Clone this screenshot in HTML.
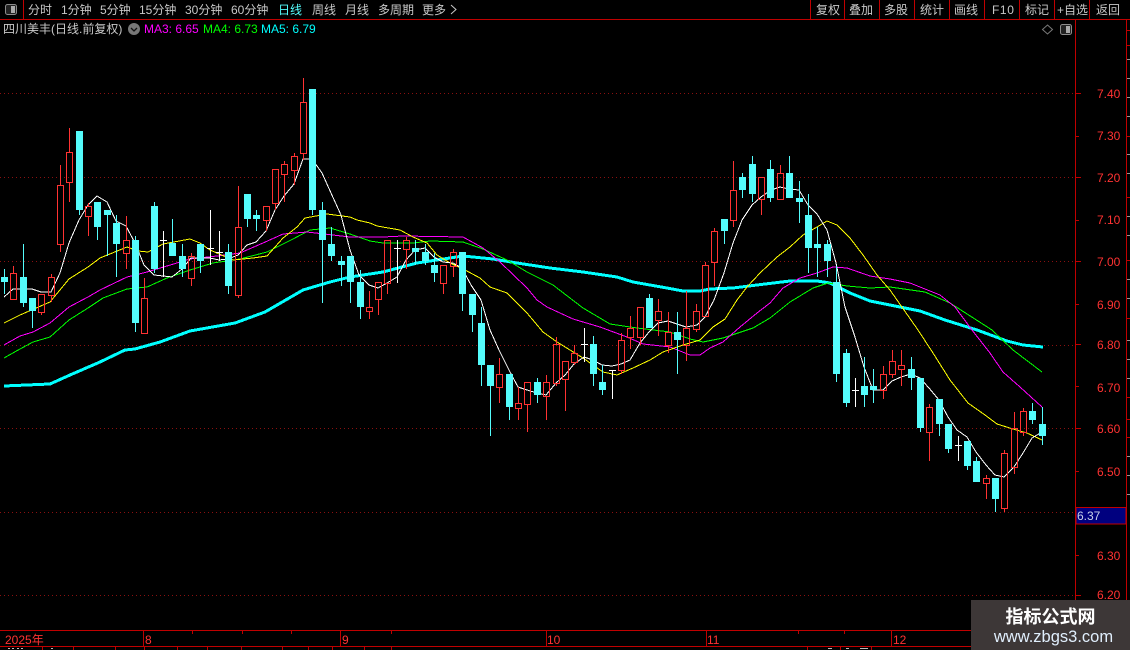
<!DOCTYPE html>
<html><head><meta charset="utf-8"><style>
html,body{margin:0;padding:0;background:#000;width:1130px;height:650px;overflow:hidden}
svg{display:block}
text{font-family:"Liberation Sans","WenQuanYi Zen Hei","Noto Sans CJK SC",sans-serif;font-size:12px}
.n text{fill:#c8c8c8}
.a text{fill:#ff3232}
.l{fill:none;stroke-linejoin:round;shape-rendering:crispEdges}
</style></head><body>
<svg width="1130" height="650" viewBox="0 0 1130 650" xmlns="http://www.w3.org/2000/svg">
<rect width="1130" height="650" fill="#000"/>
<!-- grid -->
<path d="M0 93.500H1075M0 177.500H1075M0 261.500H1075M0 345.500H1075M0 428.500H1075M0 512.500H1075M0 595.500H1075" stroke="#8a1010" stroke-dasharray="1 3" shape-rendering="crispEdges"/>
<!-- frame -->
<path d="M0 19.500H1130M23.500 0V19M810.500 0V19M844.500 0V19M879.500 0V19M914.500 0V19M949.500 0V19M984.500 0V19M1019.500 0V19M1054.500 0V19M1089.500 0V19M1075.500 19V630M1126.500 19V630M0 630.500H1130M0 646.500H1130M143.500 630V646M340.500 630V646M546.500 630V646M706.500 630V646M891.500 630V646M192.500 630V634M242.500 630V634M291.500 630V634M391.500 630V634M798.500 630V634M844.500 630V634M42.500 646V650M73.500 646V650M115.500 646V650M144.500 646V650M177.500 646V650M207.500 646V650M241.500 646V650M282.500 646V650M308.500 646V650M332.500 646V650M364.500 646V650M391.500 646V650M807.500 646V650M840.500 646V650M871.500 646V650" stroke="#c00000" fill="none" shape-rendering="crispEdges"/>
<path d="M1075 93.500H1081M1075 136.500H1079M1075 177.500H1081M1075 220.500H1079M1075 261.500H1081M1075 304.500H1079M1075 344.500H1081M1075 386.500H1079M1075 428.500H1081M1075 471.500H1079M1075 512.500H1081M1075 555.500H1079M1075 595.500H1081M1126 30.500H1130M1126 45.500H1130M1126 136.500H1130M1126 197.500H1130M1126 260.500H1130M1126 318.500H1130M1126 397.500H1130M1126 419.500H1130M1126 437.500H1130" stroke="#c00000" shape-rendering="crispEdges"/>
<path d="M1127 59.500H1130M1127 78.500H1130M1127 97.500H1130M1127 116.500H1130M1127 154.500H1130M1127 173.500H1130M1127 216.500H1130M1127 235.500H1130M1127 279.500H1130M1127 298.500H1130M1127 340.500H1130M1127 359.500H1130M1127 378.500H1130M1127 456.500H1130M1127 475.500H1130M1127 494.500H1130" stroke="#999" shape-rendering="crispEdges"/>
<!-- MA lines -->
<polyline class="l" stroke="#00ffff" stroke-width="3" points="4,386 50,384 70,375 100,362 125,350 135,349 160,342 190,331 235,323 265,312 303,290 330,282 350,277 383,272 417,263 450,258 463,256 493,259 517,263 550,268 583,272 617,277 633,282 667,288 683,291 700,291 710,289 733,288 757,285 790,281 817,281 830,283 850,293 870,301 890,305 920,311 945,320 977,330 1007,341 1023,345 1043,347"/>
<polyline class="l" stroke="#00ff00" points="4,358 20,349 33,342 50,337 69,320 88,308 103,298 127,289 147,287 167,278 190,270 213,263 240,259 267,252 293,239 310,230 330,228 350,234 370,241 383,243 413,243 430,241 463,242 483,249 507,260 527,272 553,285 583,308 610,324 637,328 670,332 690,339 703,342 723,338 753,328 770,318 790,302 813,288 828,283 847,286 870,288 890,287 925,292 950,303 992,330 1013,350 1042,372"/>
<polyline class="l" stroke="#ff00ff" points="4,345 20,336 33,332 50,323 69,307 88,297 100,290 127,277 147,272 167,266 190,259 217,256 240,253 263,243 283,234 307,232 350,237 383,237 403,236 463,237 483,248 500,262 527,288 537,300 547,307 573,319 600,327 627,337 643,344 670,347 690,355 700,355 710,348 723,342 740,327 757,313 770,303 783,288 800,278 817,273 833,267 847,268 870,276 890,279 910,283 940,295 955,307 972,330 990,353 1003,372 1020,387 1042,407"/>
<polyline class="l" stroke="#ffff00" points="4,323 20,315 50,302 69,279 88,267 100,258 127,247 138,251 148,252 163,244 190,239 200,243 210,250 233,260 253,258 267,256 283,238 297,227 305,218 327,214 350,217 357,220 370,223 377,226 400,230 413,237 427,243 437,255 450,263 465,270 480,278 490,287 507,293 527,313 543,332 557,342 583,358 603,372 617,375 633,368 650,360 663,352 683,345 700,340 713,327 725,319 737,300 747,287 760,273 777,257 790,247 803,235 817,227 827,221 837,225 850,238 863,255 877,275 890,290 918,330 933,353 950,380 968,403 985,415 997,424 1013,429 1027,433 1042,440"/>
<polyline class="l" stroke="#ffffff" points="4,297 13,289 32,289 41,292 51,292 60,273 69,243 79,220 88,205 97,196 107,202 116,221 126,226 135,243 144,265 154,275 163,276 172,277 182,269 191,258 210,258 219,260 228,259 238,255 247,245 256,242 266,231 275,210 284,196 294,184 303,159 312,159 322,173 331,193 341,215 350,250 359,275 369,285 378,288 387,283 397,277 406,260 415,250 425,248 434,257 443,262 453,263 462,268 471,285 481,300 490,330 499,350 509,370 518,387 527,390 537,393 546,395 556,383 565,375 574,364 584,357 593,360 602,365 612,366 621,364 630,360 640,343 649,332 658,323 668,321 677,324 686,327 697,325 705,317 714,300 724,273 733,243 742,220 752,205 761,197 771,190 780,187 789,189 799,190 808,205 817,214 827,230 836,263 845,307 855,337 864,367 873,390 883,390 892,381 901,377 911,374 920,378 929,388 939,400 948,417 957,430 967,437 976,452 986,465 995,475 1004,477 1014,467 1023,453 1032,438 1042,432"/>
<g shape-rendering="crispEdges">
<!-- cyan wicks -->
<path stroke="#54fcfc" fill="none" d="M4.500 269V294M23.500 244V307M32.500 298V328M79.500 131V215M97.500 202V240M107.500 210V256M116.500 215V277M135.500 236V332M154.500 202V273M172.500 219V256M182.500 244V277M200.500 244V273M228.500 244V294M247.500 194V227M256.500 210V231M312.500 89V215M322.500 202V303M331.500 227V261M341.500 256V286M350.500 256V303M360.500 270V319M415.500 240V265M425.500 244V265M434.500 253V282M462.500 252V311M472.500 294V332M481.500 307V386M490.500 365V436M509.500 374V420M537.500 378V403M593.500 336V386M602.500 365V395M649.500 294V328M677.500 312V374M724.500 219V244M742.500 173V198M752.500 156V202M770.500 160V202M789.500 156V198M799.500 181V223M808.500 194V273M817.500 227V277M827.500 240V277M836.500 266V382M846.500 349V407M864.500 357V407M873.500 369V403M911.500 357V390M920.500 378V432M939.500 399V436M948.500 424V453M967.500 441V470M976.500 457V482M995.500 478V512M1032.500 403V424M1042.500 407V445"/>
<!-- cyan bodies -->
<path fill="#54fcfc" d="M1 277h7V282h-7zM20 277h7V303h-7zM29 298h7V311h-7zM76 131h7V210h-7zM94 202h7V227h-7zM104 210h7V215h-7zM113 223h7V244h-7zM132 240h7V323h-7zM151 206h7V269h-7zM169 243h7V256h-7zM179 256h7V269h-7zM197 244h7V261h-7zM225 252h7V286h-7zM244 194h7V219h-7zM253 215h7V219h-7zM309 89h7V210h-7zM319 210h7V240h-7zM328 244h7V256h-7zM338 261h7V265h-7zM347 256h7V282h-7zM357 282h7V307h-7zM412 248h7V252h-7zM422 252h7V261h-7zM431 265h7V273h-7zM459 252h7V294h-7zM469 294h7V315h-7zM478 323h7V365h-7zM487 365h7V386h-7zM506 374h7V407h-7zM534 382h7V395h-7zM590 344h7V374h-7zM599 382h7V390h-7zM646 298h7V328h-7zM674 332h7V340h-7zM721 219h7V231h-7zM739 177h7V190h-7zM749 164h7V194h-7zM767 169h7V198h-7zM786 173h7V198h-7zM796 198h7V202h-7zM805 215h7V248h-7zM814 244h7V248h-7zM824 244h7V261h-7zM833 282h7V374h-7zM843 353h7V403h-7zM861 386h7V395h-7zM870 386h7V390h-7zM908 369h7V378h-7zM917 378h7V428h-7zM936 399h7V424h-7zM945 424h7V449h-7zM964 441h7V466h-7zM973 461h7V482h-7zM992 478h7V499h-7zM1029 411h7V420h-7zM1039 424h7V436h-7z"/>
<!-- red wicks -->
<path stroke="#ff3232" fill="none" d="M13.500 266V273M41.500 312V315M51.500 274V277M51.500 295V302M60.500 165V185M60.500 244V252M69.500 128V152M69.500 182V202M88.500 203V206M88.500 216V236M126.500 216V240M126.500 253V269M144.500 278V298M191.500 253V256M191.500 278V286M238.500 186V227M238.500 295V298M266.500 220V231M275.500 203V210M284.500 161V164M284.500 174V202M294.500 153V156M294.500 170V185M303.500 78V102M303.500 153V160M369.500 291V307M369.500 311V319M378.500 299V315M387.500 283V294M406.500 237V240M406.500 249V269M443.500 283V294M453.500 249V252M453.500 266V277M499.500 358V374M499.500 387V403M518.500 387V403M518.500 408V420M527.500 404V432M546.500 375V382M546.500 396V420M556.500 337V344M556.500 383V386M565.500 379V411M574.500 345V353M574.500 362V365M621.500 333V340M621.500 370V374M630.500 316V328M630.500 337V349M640.500 337V345M658.500 299V311M658.500 320V336M668.500 312V332M668.500 345V353M686.500 291V328M686.500 345V361M696.500 304V311M696.500 329V332M705.500 262V265M714.500 228V231M714.500 262V286M733.500 161V190M733.500 220V227M761.500 199V215M780.500 165V173M883.500 366V374M883.500 390V399M892.500 350V361M892.500 374V378M901.500 350V365M901.500 369V386M929.500 404V407M929.500 432V461M986.500 475V478M986.500 483V499M1004.500 450V453M1004.500 508V512M1014.500 412V428M1014.500 467V474M1023.500 408V411M1023.500 432V436"/>
<!-- red bodies -->
<path stroke="#ff3232" fill="none" d="M10.500 273.500h6V299.500h-6zM38.500 294.500h6V312.500h-6zM48.500 277.500h6V295.500h-6zM57.500 185.500h6V244.500h-6zM66.500 152.500h6V182.500h-6zM85.500 206.500h6V216.500h-6zM123.500 240.500h6V253.500h-6zM141.500 298.500h6V333.500h-6zM188.500 256.500h6V278.500h-6zM235.500 227.500h6V295.500h-6zM263.500 206.500h6V220.500h-6zM272.500 169.500h6V203.500h-6zM281.500 164.500h6V174.500h-6zM291.500 156.500h6V170.500h-6zM300.500 102.500h6V153.500h-6zM366.500 307.500h6V311.500h-6zM375.500 282.500h6V299.500h-6zM384.500 240.500h6V283.500h-6zM403.500 240.500h6V249.500h-6zM440.500 265.500h6V283.500h-6zM450.500 252.500h6V266.500h-6zM496.500 374.500h6V387.500h-6zM515.500 403.500h6V408.500h-6zM524.500 382.500h6V404.500h-6zM543.500 382.500h6V396.500h-6zM553.500 344.500h6V383.500h-6zM562.500 361.500h6V379.500h-6zM571.500 353.500h6V362.500h-6zM618.500 340.500h6V370.500h-6zM627.500 328.500h6V337.500h-6zM637.500 307.500h6V337.500h-6zM655.500 311.500h6V320.500h-6zM665.500 332.500h6V345.500h-6zM683.500 328.500h6V345.500h-6zM693.500 311.500h6V329.500h-6zM702.500 265.500h6V316.500h-6zM711.500 231.500h6V262.500h-6zM730.500 190.500h6V220.500h-6zM758.500 177.500h6V199.500h-6zM777.500 173.500h6V199.500h-6zM880.500 374.500h6V390.500h-6zM889.500 361.500h6V374.500h-6zM898.500 365.500h6V369.500h-6zM926.500 407.500h6V432.500h-6zM983.500 478.500h6V483.500h-6zM1001.500 453.500h6V508.500h-6zM1011.500 428.500h6V467.500h-6zM1020.500 411.500h6V432.500h-6z"/>
<!-- white doji -->
<path stroke="#fff" fill="none" d="M163.500 231V277M160 240.500h7M210.500 210V265M207 248.500h7M219.500 231V261M216 252.500h7M397.500 240V283M394 248.500h7M584.500 328V362M581 344.500h7M612.500 370V399M609 370.500h7M855.500 378V407M852 390.500h7M958.500 436V461M955 445.500h7"/>
</g>
<!-- top nav -->
<g class="n">
<text x="28" y="14">分时</text><text x="61" y="14">1分钟</text><text x="100" y="14">5分钟</text><text x="139" y="14">15分钟</text><text x="185" y="14">30分钟</text><text x="231" y="14">60分钟</text>
<text x="278" y="14" style="fill:#54fcfc">日线</text>
<text x="312" y="14">周线</text><text x="345" y="14">月线</text><text x="378" y="14">多周期</text><text x="422" y="14">更多</text>
<path d="M451 5l5 4.500-5 4.500" fill="none" stroke="#c8c8c8"/>
<text x="816" y="14">复权</text><text x="849" y="14">叠加</text><text x="884" y="14">多股</text><text x="920" y="14">统计</text><text x="954" y="14">画线</text>
<text x="992" y="14" style="letter-spacing:.6px">F10</text>
<text x="1025" y="14">标记</text><text x="1057" y="14">+自选</text><text x="1096" y="14">返回</text>
</g>
<!-- toggle icons -->
<rect x="5.500" y="4.500" width="11" height="10" rx="2" fill="#222" stroke="#8c8c8c"/><rect x="11" y="6" width="4" height="7" fill="#aaa"/>
<rect x="1060.500" y="24.500" width="11" height="10" rx="2" fill="#222" stroke="#8c8c8c"/><rect x="1066" y="26" width="4" height="7" fill="#aaa"/>
<path d="M1047.500 25l5 4.500-5 4.500-5-4.500z" fill="none" stroke="#7a7a7a"/>
<!-- info line -->
<text x="3" y="33" fill="#c8c8c8">四川美丰(日线.前复权)</text>
<circle cx="134" cy="29" r="6" fill="#777"/><path d="M131 28l3 3 3-3" fill="none" stroke="#111" stroke-width="1.300"/>
<text x="144" y="33" fill="#ff00ff">MA3: 6.65</text>
<text x="203" y="33" fill="#00ff00">MA4: 6.73</text>
<text x="261" y="33" fill="#00ffff">MA5: 6.79</text>
<!-- price axis -->
<g class="a">
<text x="1097" y="98">7.40</text><text x="1097" y="140">7.30</text><text x="1097" y="182">7.20</text><text x="1097" y="224">7.10</text><text x="1097" y="266">7.00</text><text x="1097" y="309">6.90</text><text x="1097" y="349">6.80</text><text x="1097" y="392">6.70</text><text x="1097" y="433">6.60</text><text x="1097" y="476">6.50</text><text x="1097" y="560">6.30</text><text x="1097" y="599">6.20</text>
<text x="5" y="644">2025年</text><text x="145" y="644">8</text><text x="342" y="644">9</text><text x="547" y="644">10</text><text x="707" y="644">11</text><text x="893" y="644">12</text>
</g>
<rect x="1076" y="507.500" width="50" height="16.500" fill="#00007f" stroke="#c00000"/>
<text x="1077" y="520" fill="#c8d0e8">6.37</text>
<!-- clipped bottom row stubs -->
<path d="M8 648.500h2M12 648.500h2M17 648.500h2M21 648.500h2M51 648.500h2M828 648.500h4M846 648.500h3M860 648.500h8" stroke="#bbb" shape-rendering="crispEdges"/>
<!-- watermark -->
<rect x="971" y="600" width="159" height="50" fill="#3d3737"/>
<text x="1050.500" y="623" text-anchor="middle" fill="#fff" style="font-size:18px;font-weight:bold;font-family:'Liberation Sans','Noto Sans CJK SC',sans-serif">指标公式网</text>
<text x="1053.500" y="642" text-anchor="middle" fill="#e0eefc" style="font-size:16.500px;font-family:'Liberation Sans',sans-serif">www.zbgs3.com</text>
</svg>
</body></html>
